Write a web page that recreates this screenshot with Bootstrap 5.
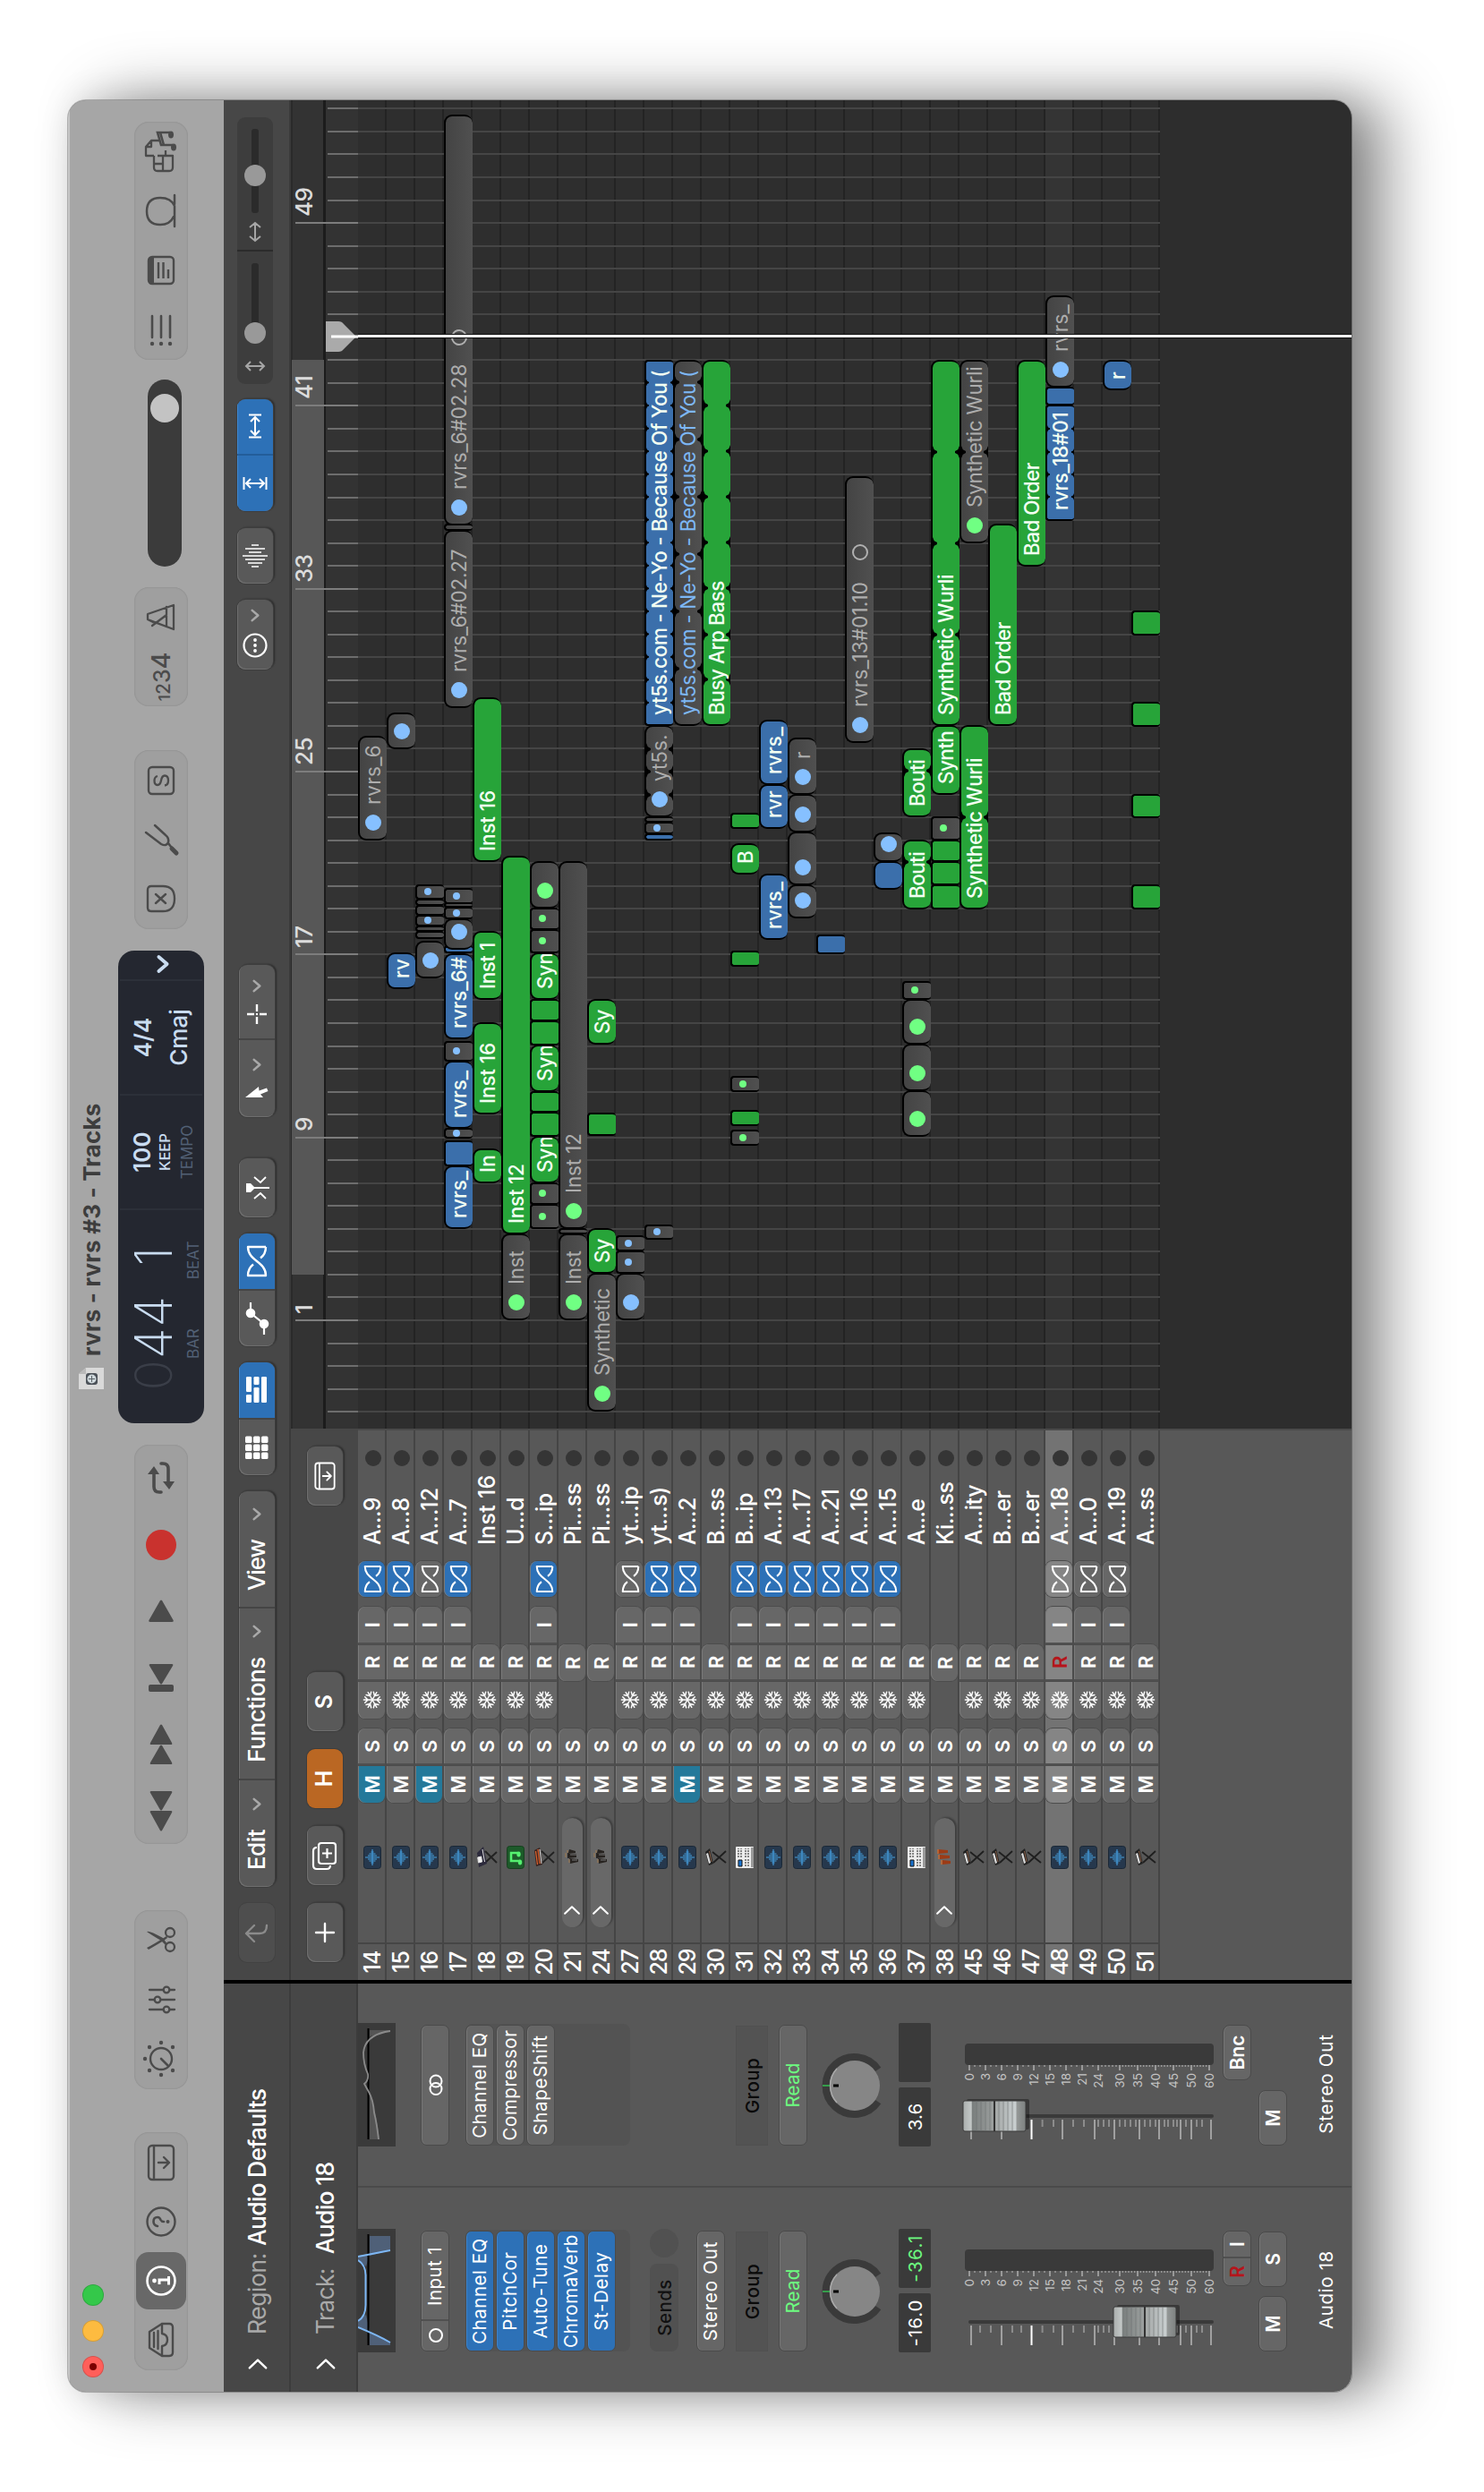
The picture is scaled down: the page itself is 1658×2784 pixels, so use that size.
<!DOCTYPE html>
<html lang="en">
<head>
<meta charset="utf-8">
<title>rvrs - rvrs #3 - Tracks</title>
<link href="https://cdn.jsdelivr.net/npm/bootstrap@5.3.0/dist/css/bootstrap.min.css" rel="stylesheet">
<style>
  body { margin: 0; background: #fff; font-family: Inter, "Liberation Sans", sans-serif; }
  /* portrait page that carries the landscape window turned a quarter to the left */
  .sheet { width: 1658px; height: 2784px; position: relative; overflow: hidden; }
  .stage { width: 2784px; height: 1658px; padding: 76px 112px; position: absolute; left: 0; top: 0; transform-origin: 0 0; transform: translateY(2784px) rotate(-90deg); }
  .win { width: 2560px; height: 1434px; border-radius: 20px; overflow: hidden; background: #585858; }
  .winshadow { border-radius: 20px; width: 2560px; height: 1434px; box-shadow: 0 0 0 1px rgba(0,0,0,.25), 0 40px 70px rgba(0,0,0,.42), 0 8px 40px rgba(0,0,0,.16); }
  svg { display: block; overflow: visible; }
  .fit { display: inline-block; white-space: nowrap; }
  /* title and toolbar */
  .topbar { height: 174px; background: #a6a6a6; color: #4b4b4b; box-shadow: inset 0 2px 0 #c6c6c6; }
  .titlerow { height: 56px; padding-left: 16px; }
  .light { width: 24px; height: 24px; border-radius: 50%; margin-right: 16px; border: 1px solid rgba(0,0,0,.15); }
  .light i { width: 8px; height: 8px; background: #7a0000; border-radius: 50%; }
  .doc { margin-left: 984px; margin-right: 13px; margin-top: -4px; }
  .wtitle { font-weight: 700; font-size: 26px; line-height: 52px; color: #3d3d3d; margin-top: -3px; }
  .toolrow { height: 96px; }
  .tgroup { height: 60px; border-radius: 16px; background: #9f9f9f; box-shadow: inset 0 0 2px rgba(0,0,0,.18); }
  .tgroup > div { display: flex; align-items: center; justify-content: center; }
  .g1 { margin-left: 24px; width: 266px; padding: 0 1px; } .g1 > div { width: 66px; }
  .g1 .sel { background: #686868; width: 64px; margin: 2px 1px; border-radius: 14px; color: #fff; height: 56px; }
  .g2 { margin-left: 48px; width: 200px; padding: 0 1px; } .g2 > div { width: 66px; }
  .g3 { margin-left: 74px; width: 446px; } .g3 > div { width: 74.3px; }
  .g4 { margin-left: 24px; width: 200px; padding: 0 1px; } .g4 > div { width: 66px; }
  .g5 { margin-left: 49px; width: 133px; } .g5 > div { width: 66.5px; }
  .g6 { margin-left: 22px; width: 266px; } .g6 > div { width: 66.5px; }
  .lcd { margin-left: 24px; width: 528px; height: 96px; border-radius: 18px; background: #242730; color: #c9dcf0; padding: 2px 0; }
  .lcd .cell { border-right: 2px solid #2c3039; height: 92px; text-align: center; }
  .lcd small { color: #526075; font-size: 17px; line-height: 20px; display: block; }
  .posn { width: 240px; font-weight: 200; font-size: 57px; line-height: 76px; padding-left: 36px; text-align: left !important; }
  .posn span { display: inline-block; width: 35.5px; text-align: center; }
  .posn .dimz { color: #3a3e48; } .posn .bt { margin-left: 26px; }
  .posn small { font-weight: 400; margin-top: -4px; padding-left: 36px; }
  .posn small b { font-weight: 400; margin-left: 55px; }
  .tempo { width: 128px; font-weight: 600; font-size: 26px; line-height: 30px; padding-top: 10px; }
  .tempo em { font-style: normal; font-size: 16.5px; font-weight: 500; display: block; line-height: 20px; }
  .tempo small { font-weight: 400; margin-top: 5px; }
  .sig { width: 128px; font-weight: 600; font-size: 26px; line-height: 40px; padding-top: 6px; }
  .sig div + div { font-weight: 500; }
  .vol { margin-left: 23px; margin-top: 8px; width: 209px; height: 38px; border-radius: 19px; background: #3b3b3b; padding: 3px 16px; }
  .vol i { width: 32px; height: 32px; border-radius: 50%; background: #c3c3c3; }
  .count4 { font-weight: 500; align-items: baseline; display: flex; }
  .count4 span:nth-child(1){font-size:17px} .count4 span:nth-child(2){font-size:21px} .count4 span:nth-child(3){font-size:25px} .count4 span:nth-child(4){font-size:29px}
  /* inspector */
  .insp { width: 460px; border-right: 4px solid #000; color: #fff; }
  .ihead { height: 75px; background: #474747; border-bottom: 2px solid #3c3c3c; font-size: 26.5px; font-weight: 500; padding-left: 24px; padding-top: 2px; }
  .ihead + .ihead { padding-top: 5px; }
  .ihead .lab { color: #a9a9a9; font-weight: 400; margin-left: 26px; }
  .strip { width: 230px; height: 1110px; padding-left: 45px; border-right: 2px solid #4a4a4a; font-size: 20.5px; }
  .strip + .strip { width: 226px; border-right: 0; }
  .eq { width: 138px; height: 42px; background: #3a3a3a; margin-left: -1px; overflow: hidden; }
  .slot { width: 135px; height: 32px; border-radius: 7px; background: #666; border: 1px solid #4a4a4a; box-shadow: inset 0 1px 0 #777; display: flex; align-items: center; justify-content: center; overflow: hidden; padding-top: 1px; }
  .slot.on { background: #2d71b7; box-shadow: inset 0 1px 0 #3d83ca; }
  .rack { height: 184px; width: 136px; border-radius: 8px; background: #535353; margin-top: 18px; }
  .rack .slot { margin-bottom: 2px; }
  .sendrow { height: 32px; margin-top: 22px; color: #111; font-weight: 500; }
  .sendrow .a { width: 98px; height: 32px; background: #515151; border-radius: 8px; margin-right: 7px; text-align: center; line-height: 34px; }
  .sendrow .b { width: 32px; height: 32px; background: #515151; border-radius: 50%; }
  .grp { width: 134px; height: 36px; background: #535353; border: 1px solid #505050; margin-top: 12px; color: #0a0a0a; text-align: center; line-height: 35px; font-weight: 500; }
  .rd { color: #6dfb80; margin-top: 12px; }
  .vbox { width: 66px; height: 36px; background: #3a3a3a; border-radius: 2px; text-align: center; line-height: 37px; }
  .kbtn { width: 62px; height: 32px; border-radius: 8px; background: #666; border: 1px solid #4a4a4a; box-shadow: inset 0 1px 0 #777; font-weight: 600; font-size: 21px; text-align: center; line-height: 32px; }
  .kbtn.half { display: flex; padding: 0; } .kbtn.half span { width: 50%; height: 30px; } .kbtn.half span + span { border-left: 2px solid #505050; }
  .redt { color: #b5151b; }
  /* tracks area */
  .main { width: 2100px; }
  .menubar { height: 75px; background: #474747; border-bottom: 2px solid #3a3a3a; padding-left: 20px; font-size: 26px; font-weight: 500; color: #fff; }
  .pill { height: 40px; border-radius: 9px; background: #595959; box-shadow: inset 1px 1px 0 #6e6e6e, 0 0 0 1px #3d3d3d, 1px 2px 2px rgba(0,0,0,.4); display: flex; align-items: center; overflow: hidden; }
  .pill > div { height: 40px; display: flex; align-items: center; justify-content: center; }
  .pill > div + div { border-left: 2px solid #454545; }
  .pill .blue { background: #2d71b7; box-shadow: inset 0 1px 0 #3f87cf; }
  .pill.up { margin-top: -4px; }
  .w66 { width: 66px; justify-content: center; }
  .slid { background: #3d3d3d; box-shadow: none; }
  .thead { width: 616px; height: 75px; background: #474747; padding-left: 20px; color: #fff; font-size: 25px; font-weight: 600; }
  .ruler { width: 1484px; height: 75px; background: #333; position: relative; overflow: hidden; }
  .rband { height: 39px; background: #333; border-top: 2px solid #2a2a2a; border-bottom: 3px solid #1c1c1c; box-sizing: border-box; }
  .cyc { position: absolute; top: 1px; height: 36px; background: #575757; }
  .tick { position: absolute; top: 41px; height: 34px; width: 2px; background: #6d6d6d; }
  .tick.maj { top: 5px; height: 70px; background: #7d7d7d; }
  .barno { position: absolute; top: -2px; font-size: 26px; line-height: 34px; font-weight: 500; color: #dcdcdc; letter-spacing: -.5px; }
  .tlist { width: 616px; height: 1110px; background: #585858; color: #fff; border-right: 2px solid #4a4a4a; }
  .trk { height: 32px; border-bottom: 2px solid #454545; align-items: stretch; font-size: 25px; font-weight: 500; line-height: 33px; }
  .trk.cur { background: #737373; }
  .tno { width: 42px; height: 30px; border-right: 2px solid #454545; text-align: center; letter-spacing: -1px; }
  .ticon { width: 156px; height: 32px; display: flex; align-items: center; }
  .disc { margin-left: 17px; margin-top: -2px; width: 122px; height: 23px; border-radius: 12px; background: #686868; box-shadow: 1px 2px 2px rgba(0,0,0,.3); display: flex; align-items: center; }
  .tb { height: 30px; width: 41.5px; background: #676767; text-align: center; font-size: 22px; font-weight: 600; display: flex; align-items: center; justify-content: center; padding-top: 2px; box-shadow: inset 0 1px 0 #7a7a7a, 0 0 0 1px #4c4c4c; }
  .cur .tb { background: #858585; }
  .tb.first { border-radius: 8px 0 0 8px; } .tb.last { border-radius: 0 8px 8px 0; } .tb.only { border-radius: 8px; }
  .tb + .tb { border-left: 2px solid #505050; }
  .tb.cy { background: #24799a; } .tb.fx { background: #2d71b7; border-radius: 8px; width: 40px; }
  .tb.fx.off { background: #676767; } .cur .tb.fx.off { background: #858585; }
  .tname { width: 88px; height: 30px; } .tdot { width: 18px; height: 18px; border-radius: 50%; background: #353535; margin-top: 8px; }
  .arr { width: 1484px; height: 1110px; background: #2d2d2d; position: relative; overflow: hidden; }
  .lane { height: 32px; border-bottom: 2px solid #232323; background: #2e2e2e; }
  .lane.cur { background: #343434; }
  .gl { position: absolute; top: 0; height: 896px; width: 2px; background: #454545; }
  .rg { position: absolute; height: 32px; border: 2px solid #000; border-bottom: 0; border-radius: 9px; overflow: hidden; font-size: 22.5px; line-height: 30px; white-space: nowrap; color: #f2fff2; font-weight: 500; }
  .rg.slim { border-radius: 4px; }
  .rg.b { background: #3b6fab; } .rg.g { background: #27a439; }
  .rg.k, .rg.m { background: linear-gradient(#444, #505050); color: #adadad; font-weight: 400; }
  .rg .tx { padding-left: 10px; } .rg.k .tx, .rg.m .tx { padding-left: 38px; } .rg.bt .tx { padding-left: 10px; color: #7db7f5; }
  .rg .dt { position: absolute; border-radius: 50%; background: #86c0ff; } .rg.m .dt { background: #70ff83; }
  .rg .rn { position: absolute; width: 18px; height: 18px; border: 2px solid #b0b0b0; border-radius: 50%; top: 6px; }
  .nt { position: absolute; width: 14px; height: 5px; background: #000; z-index: 1; clip-path: polygon(0 0, 100% 0, 70% 35%, 58% 100%, 42% 100%, 30% 35%); }
  .slim .nt { width: 8px; height: 3px; margin-left: 3px; }
  .nt.lo { transform: scaleY(-1); }
  .phead { position: absolute; top: 0; width: 3px; height: 1110px; background: #fff; box-shadow: 0 0 0 1px #111; z-index: 3; }
  .pmark { position: absolute; top: 39px; z-index: 3; }
</style>
<script src="https://cdn.jsdelivr.net/npm/bootstrap@5.3.0/dist/js/bootstrap.bundle.min.js"></script>
</head>
<body>
<svg width="0" height="0" class="position-absolute">
  <defs>
    <symbol id="i-flex" viewBox="-18 -12 36 24"><path d="M16 10V-10C0-10 0 10-16 10V-10C-9-10-5-6-3.500-4M3.500 4C5 6 9 10 16 10" fill="none" stroke="currentColor" stroke-width="2.400" stroke-linejoin="round"/></symbol>
    <symbol id="i-dl" viewBox="-21 -16 42 32"><g fill="none" stroke="currentColor" stroke-width="2.400" stroke-linecap="round" stroke-linejoin="round"><rect x="-19" y="-14" width="38" height="28" rx="4"/><path d="M-18-8H18M0-3V8M-6 3L0 9L6 3"/></g></symbol>
    <symbol id="i-snow" viewBox="-12 -12 24 24"><g stroke="currentColor" stroke-width="1.600" fill="none" stroke-linecap="round"><g id="arm"><path d="M0 0V-10.500M-3.500-9L0-5.500L3.500-9"/></g><use href="#arm" transform="rotate(60)"/><use href="#arm" transform="rotate(120)"/><use href="#arm" transform="rotate(180)"/><use href="#arm" transform="rotate(240)"/><use href="#arm" transform="rotate(300)"/></g></symbol>
    <symbol id="i-chev" viewBox="-8 -6 16 12"><path d="M-6-3.500L0 3.500L6-3.500" fill="none" stroke="currentColor" stroke-width="2.800" stroke-linecap="round" stroke-linejoin="round"/></symbol>
    <symbol id="i-right" viewBox="-8 -12 16 24"><path d="M-5-10.500L5 0L-5 10.500" fill="none" stroke="currentColor" stroke-width="2.800" stroke-linecap="round" stroke-linejoin="round"/></symbol>
    <symbol id="t-aud" viewBox="0 0 26 20"><rect x=".5" y=".5" width="25" height="19" rx="3" fill="#26384d" stroke="#1b2836"/><path d="M4 10h18M7 8.500v3M9 6.500v7M11 5v10M13 2v16M15 5v10M17 6.500v7M19 8.500v3" stroke="#459fe0" stroke-width="1.100"/></symbol>
    <symbol id="t-key" viewBox="0 0 26 24"><path d="M7 9L20 23M19 8L7 23" stroke="#1f1f1f" stroke-width="1.800"/><path d="M4 4L19 0L23 5L6 9Z" fill="#222"/><path d="M6 4L17 1L18 3L7 6Z" fill="#dcdcdc"/><path d="M8 7L20 4.500" stroke="#8a6048" stroke-width="1"/></symbol>
    <symbol id="t-key2" viewBox="0 0 26 24"><path d="M6 9L19 23M20 9L7 23" stroke="#222" stroke-width="1.800"/><path d="M3 3L21 1L24 7L5 10Z" fill="#3a2420"/><path d="M5 4.500L20 2.500M6 7L22 5" stroke="#d9622f" stroke-width="1.300"/><path d="M6 9L22 7" stroke="#ddd" stroke-width="1"/></symbol>
    <symbol id="t-syn" viewBox="0 0 26 24"><path d="M8 11L19 23M20 10L7 23" stroke="#222" stroke-width="2"/><path d="M2 3L18 1L25 8L6 12Z" fill="#2c2a3c"/><path d="M7 2.500l6-.8l1 4l-6 .8zM8 9.500L22 7" fill="#eee" stroke="#ddd" stroke-width="1"/></symbol>
    <symbol id="t-note" viewBox="0 0 26 20"><rect x=".5" y=".5" width="25" height="19" rx="3" fill="#1d5a2a" stroke="#17401f"/><path d="M9 15V5H18V13" fill="none" stroke="#55f070" stroke-width="2.600"/><ellipse cx="7.500" cy="15" rx="3" ry="2.200" fill="#55f070"/><ellipse cx="16.500" cy="13.500" rx="3" ry="2.200" fill="#55f070"/></symbol>
    <symbol id="t-drum" viewBox="0 0 26 20"><rect x="1" width="24" height="20" rx="1" fill="#ececec"/><rect x="2" y="17" width="22" height="3" fill="#999"/><path d="M3 3h7v4H3z" fill="#1b74d0" stroke="#111"/><path d="M13 3h10M13 6h10M3 11h8M3 14h8M13 11h10M13 14h10" stroke="#777" stroke-width="1.800" stroke-dasharray="2 1"/></symbol>
    <symbol id="t-band" viewBox="0 0 26 20"><path d="M6 8l6-1l-1 10h-3zM12 5h6l-1 10h-4zM18 6l4 1l-2 7h-2z" fill="#272320"/><path d="M7 7h4M13 3h5M18 5h3" stroke="#8c755a" stroke-width="1.600"/><path d="M10 10v6M16 8v7" stroke="#777"/></symbol>
    <symbol id="t-conga" viewBox="0 0 26 20"><path d="M5 8h5l-1 9h-3zM11 5h5l-1 11h-3zM17 3h5l-1 11h-3z" fill="#9c3b16"/><path d="M5 7h5M11 4h5M17 3h5" stroke="#c06a35" stroke-width="1.600"/></symbol>
    <linearGradient id="cap" x1="0" y1="0" x2="0" y2="1"><stop offset="0" stop-color="#a9adac"/><stop offset=".13" stop-color="#c3c8c7"/><stop offset=".15" stop-color="#7a7f7e"/><stop offset=".48" stop-color="#9b9f9e"/><stop offset=".52" stop-color="#a4a8a7"/><stop offset=".84" stop-color="#c9cfd0"/><stop offset=".86" stop-color="#949897"/><stop offset="1" stop-color="#7d8180"/></linearGradient>
  </defs>
</svg>

<div class="sheet"><div class="stage"><div class="winshadow"><div class="win d-flex flex-column">

  <header class="topbar">
    <div class="titlerow d-flex align-items-center">
      <div class="light d-flex align-items-center justify-content-center" style="background:#ff5f5a"><i></i></div>
      <div class="light" style="background:#fdbb40"></div>
      <div class="light" style="background:#34c84a"></div>
      <svg class="doc" width="24" height="28" viewBox="0 0 24 28"><path d="M0 0H17L24 8V28H0Z" fill="#d9d9d9"/><path d="M17 0V8H24Z" fill="#b9b9b9"/><rect x="5" y="8" width="13" height="13" rx="3" fill="#4b5158"/><circle cx="11.500" cy="14.500" r="5" fill="#cfd8dc"/><path d="M8 14.500h7M11.500 11v7" stroke="#5b6368"/></svg>
      <div class="wtitle fit" data-w="282">rvrs - rvrs #3 - Tracks</div>
    </div>
    <div class="toolrow d-flex align-items-center">
      <div class="tgroup g1 d-flex">
        <div><svg width="40" height="32" viewBox="-20 -16 40 32"><g fill="none" stroke="currentColor" stroke-width="2.400" stroke-linejoin="round" stroke-linecap="round"><path d="M-18 1L-9-13H9L18 1V9Q18 13 14 13H-14Q-18 13-18 9ZM-18 1H-7Q-6 7 0 7Q6 7 7 1H18M-8-8H8M-10-3.500H10"/></g></svg></div>
        <div class="sel"><svg width="36" height="36" viewBox="-18 -18 36 36"><circle r="15.500" fill="none" stroke="currentColor" stroke-width="2.600"/><circle cx="0" cy="-7.500" r="2.400" fill="currentColor"/><path d="M-4-2H1V8M-4.500 8.500H5" fill="none" stroke="currentColor" stroke-width="3"/></svg></div>
        <div><svg width="36" height="36" viewBox="-18 -18 36 36"><circle r="15.500" fill="none" stroke="currentColor" stroke-width="2.400"/><path d="M-5-4Q-4-8.500 0-8.500Q5-8.500 5-4Q5-1.500 2-.5Q0 .5 0 3" fill="none" stroke="currentColor" stroke-width="2.600" stroke-linecap="round"/><circle cy="7.500" r="2" fill="currentColor"/></svg></div>
        <div><svg width="42" height="32"><use href="#i-dl"/></svg></div>
      </div>
      <div class="tgroup g2 d-flex">
        <div><svg width="40" height="40" viewBox="-20 -20 40 40"><circle r="12" fill="none" stroke="currentColor" stroke-width="2.400"/><path d="M0 0L-7.500 7.500" stroke="currentColor" stroke-width="2.600" stroke-linecap="round"/><g fill="currentColor"><circle cx="0" cy="-18" r="2.200"/><circle cx="18" cy="0" r="2.200"/><circle cx="-18" cy="0" r="2.200"/><circle cx="13" cy="-13" r="2.200"/><circle cx="-13" cy="-13" r="2.200"/><circle cx="13" cy="13" r="2.200"/><circle cx="-13" cy="13" r="2.200"/></g></svg></div>
        <div><svg width="36" height="36" viewBox="-18 -18 36 36"><g fill="#9f9f9f" stroke="currentColor" stroke-width="2.300" stroke-linecap="round"><path d="M-11-13V15M0-13V15M11-13V15"/><circle cx="-11" cy="6" r="3.300"/><circle cx="0" cy="-4" r="3.300"/><circle cx="11" cy="6" r="3.300"/></g></svg></div>
        <div><svg width="32" height="36" viewBox="-16 -18 32 36"><g fill="none" stroke="currentColor" stroke-width="2.300"><circle cx="-7" cy="10" r="5"/><circle cx="9" cy="10" r="5"/></g><path d="M-8-16Q-4-8 5 6L3 7L0 3Q-6-7-10-14ZM10-16Q12-14 3 2L-4 7L-5 5L0 0Q7-12 10-16Z" fill="currentColor"/></svg></div>
      </div>
      <div class="tgroup g3 d-flex">
        <div><svg width="46" height="28" viewBox="-23 -14 46 28"><path d="M0-11V11Q0 13-2 12L-22 1Q-23 0-22-1L-2-12Q0-13 0-11ZM22-11V11Q22 13 20 12L1 1Q0 0 1-1L20-12Q22-13 22-11Z" fill="currentColor"/></svg></div>
        <div><svg width="46" height="28" viewBox="-23 -14 46 28"><path transform="scale(-1 1)" d="M0-11V11Q0 13-2 12L-22 1Q-23 0-22-1L-2-12Q0-13 0-11ZM22-11V11Q22 13 20 12L1 1Q0 0 1-1L20-12Q22-13 22-11Z" fill="currentColor"/></svg></div>
        <div><svg width="32" height="28" viewBox="-16 -14 32 28"><rect x="-16" y="-14" width="8" height="28" rx="2" fill="currentColor"/><path d="M15-12V12Q15 14 13 13L-7 1Q-8 0-7-1L13-13Q15-14 15-12Z" fill="currentColor"/></svg></div>
        <div><svg width="26" height="28" viewBox="-13 -14 26 28"><path d="M-12-12V12Q-12 15-9 13L12 1Q13 0 12-1L-9-13Q-12-15-12-12Z" fill="currentColor"/></svg></div>
        <div><svg width="34" height="34"><circle cx="17" cy="17" r="17" fill="#c9322e"/></svg></div>
        <div><svg width="36" height="32" viewBox="-18 -16 36 32"><g fill="none" stroke="currentColor" stroke-width="3.600" stroke-linecap="round"><path d="M-16 0V-2Q-16-8-10-8H5"/><path d="M16 0V2Q16 8 10 8H-4"/></g><path d="M4-15L13-8L4-2ZM-4 2L-13 9L-4 15Z" fill="currentColor"/></svg></div>
      </div>
      <div class="lcd d-flex">
        <div class="cell posn"><div><span class="dimz">0</span><span>4</span><span>4</span><span class="bt">1</span></div><small>BAR<b>BEAT</b></small></div>
        <div class="cell tempo"><div class="fit" data-w="45">100</div><em>KEEP</em><small>TEMPO</small></div>
        <div class="cell sig"><div>4/4</div><div>Cmaj</div></div>
        <div class="d-flex align-items-center" style="padding:4px 0 0 6px"><svg width="22" height="16"><use href="#i-chev"/></svg></div>
      </div>
      <div class="tgroup g4 d-flex">
        <div><svg width="32" height="34" viewBox="-16 -17 32 34"><path d="M-14-11Q-14-15-10-15H10Q14-15 14-11V2Q14 15 0 15Q-14 15-14 2ZM-5-6L5 5M5-6L-5 5" fill="none" stroke="currentColor" stroke-width="2.400" stroke-linecap="round"/></svg></div>
        <div><svg width="36" height="38" viewBox="-18 -19 36 38"><path d="M8-17L-5 0Q-8 6-3 8Q2 9 5 5L16-7M-4 8L-12 14" fill="none" stroke="currentColor" stroke-width="2.500" stroke-linecap="round"/><path d="M-10 12L-15 17" stroke="currentColor" stroke-width="5" stroke-linecap="round"/></svg></div>
        <div><svg width="32" height="32" viewBox="-16 -16 32 32"><rect x="-15" y="-14" width="30" height="28" rx="4" fill="none" stroke="currentColor" stroke-width="2.400"/><path d="M5-4Q4-7.500 0-7.500Q-5-7.500-5-4Q-5-1 0 0Q5.500 1 5.500 4Q5.500 8 0 8Q-5 8-5.500 4" fill="none" stroke="currentColor" stroke-width="2.300"/></svg></div>
      </div>
      <div class="tgroup g5 d-flex">
        <div><span class="count4"><span>1</span><span>2</span><span>3</span><span>4</span></span></div>
        <div><svg width="34" height="34" viewBox="-17 -17 34 34"><g fill="none" stroke="currentColor" stroke-width="2.300" stroke-linejoin="round" stroke-linecap="round"><path d="M-6-9L-3-15H3L13 14H-14L-7-5M-11 6H11M2 6L-10-10M-3-15L-14 14M2 6L-7-6"/></g></svg></div>
      </div>
      <div class="vol d-flex justify-content-end"><i></i></div>
      <div class="tgroup g6 d-flex">
        <div><svg width="36" height="26" viewBox="-18 -13 36 26"><path d="M-8-10H16M-8 0H16M-8 10H16" stroke="currentColor" stroke-width="2.600" stroke-linecap="round"/><g fill="currentColor"><circle cx="-15" cy="-10" r="2.200"/><circle cx="-15" cy="0" r="2.200"/><circle cx="-15" cy="10" r="2.200"/></g></svg></div>
        <div><svg width="34" height="32" viewBox="-17 -16 34 32"><rect x="-15" y="-14" width="30" height="28" rx="4" fill="none" stroke="currentColor" stroke-width="2.400"/><path d="M-15-8V-10Q-15-14-11-14H11Q15-14 15-10V-8Z" fill="currentColor"/><path d="M-9-3H9M-9 2.500H9M-9 8H1" stroke="currentColor" stroke-width="2.400"/></svg></div>
        <div><svg width="38" height="36" viewBox="-19 -18 38 36"><path d="M-17 15H-8M18 15H8M-9 15H6Q15 11 15-1Q15-16 0-16Q-15-16-15-1Q-15 10-6 14" fill="none" stroke="currentColor" stroke-width="2.500" stroke-linecap="round"/></svg></div>
        <div><svg width="44" height="38" viewBox="-22 -19 44 38"><g fill="none" stroke="currentColor" stroke-width="2.300" stroke-linejoin="round"><path d="M-5-8V-17H5L12-11V5H-5V-4M5-17V-11H12M-5-8H-18Q-22-8-22-4V9Q-22 13-18 13H-5V4M-22 2H-6M-14-8V2"/></g><rect x="1" y="-2" width="20" height="18" fill="#9f9f9f"/><path d="M7 13V0L21-4V10M7 3L21-1" fill="none" stroke="currentColor" stroke-width="2.600"/><ellipse cx="4.500" cy="14" rx="4" ry="3" fill="currentColor"/><ellipse cx="18.500" cy="11" rx="4" ry="3" fill="currentColor"/></svg></div>
      </div>
    </div>
  </header>

  <div class="d-flex flex-grow-1">
    <aside class="insp">
      <div class="ihead d-flex align-items-center"><svg width="14" height="24"><use href="#i-right"/></svg><span class="lab fit" data-w="91">Region:</span><span class="fit ms-2" data-w="175">Audio Defaults</span></div>
      <div class="ihead d-flex align-items-center"><svg width="14" height="24"><use href="#i-right"/></svg><span class="lab fit" data-w="74">Track:</span><span class="fit" style="margin-left:16px" data-w="103">Audio 18</span></div>
      <div class="d-flex">
        <section class="strip">
          <div class="eq"><svg width="138" height="42"><path d="M8 36V13H22L11 36ZM108 13H130V36H114Z" fill="#4f6078"/><path d="M28 0H35L42 9L24 13ZM103 0H108L110 13L96 9Z" fill="#4f6078"/><path d="M8 11.500H132" stroke="#000" stroke-width="2"/><path d="M11 36Q19 22 28 0M35 0Q40 8.500 53 8.500H86Q98 8.500 103 0M107 0L114 36" fill="none" stroke="#7db7f5" stroke-width="2"/></svg></div>
          <div class="slot justify-content-start" style="margin-top:28px"><svg width="34" height="32" viewBox="0 0 34 32"><circle cx="17" cy="16" r="7" fill="none" stroke="#fff" stroke-width="2"/><path d="M34 0V32" stroke="#505050" stroke-width="2"/></svg><span class="fit" style="margin-left:16px" data-w="66">Input 1</span></div>
          <div class="rack">
            <div class="slot on"><span class="fit" data-w="119">Channel EQ</span></div><div class="slot on"><span class="fit" data-w="88">PitchCor</span></div><div class="slot on"><span class="fit" data-w="106">Auto-Tune</span></div><div class="slot on"><span class="fit" data-w="127">ChromaVerb</span></div><div class="slot on"><span class="fit" data-w="88">St-Delay</span></div>
          </div>
          <div class="sendrow d-flex"><div class="a"><span class="fit" data-w="63">Sends</span></div><div class="b"></div></div>
          <div class="slot" style="margin-top:20px"><span class="fit" data-w="112">Stereo Out</span></div>
          <div class="grp"><span class="fit" data-w="62">Group</span></div>
          <div class="slot rd"><span class="fit" data-w="50">Read</span></div>
          <div class="knobrow"></div>
          <div class="d-flex" style="gap:6px;margin-left:-1px"><div class="vbox"><span class="fit" data-w="53">-16.0</span></div><div class="vbox" style="color:#6dfb80"><span class="fit" data-w="53">-36.1</span></div></div>
          <div class="fader" data-cap="170"></div>
          <div class="d-flex" style="margin-left:73px"><div class="kbtn half"><span class="redt">R</span><span>I</span></div></div>
          <div class="d-flex" style="gap:10px;margin-top:8px"><div class="kbtn">M</div><div class="kbtn">S</div></div>
          <div class="text-center" style="width:138px;margin-top:29px"><span class="fit" data-w="88">Audio 18</span></div>
        </section>
        <section class="strip">
          <div class="eq"><svg width="138" height="42"><path d="M8 13V24Q40 20 60 13ZM123 13L129 36H130V13Z" fill="#555"/><path d="M8 11.500H132" stroke="#000" stroke-width="2"/><path d="M8 23Q26 21 38 18Q52 17 61 12L70 7Q74 12 81 11Q92 6 105 6Q125 8 129 36" fill="none" stroke="#8a8a8a" stroke-width="1.800"/></svg></div>
          <div class="slot" style="margin-top:28px"><svg width="26" height="16" viewBox="0 0 26 16"><g fill="none" stroke="#fff" stroke-width="2"><circle cx="8.500" cy="8" r="6.500"/><circle cx="17" cy="8" r="6.500"/></g></svg></div>
          <div class="rack"><div class="slot"><span class="fit" data-w="119">Channel EQ</span></div><div class="slot"><span class="fit" data-w="124">Compressor</span></div><div class="slot"><span class="fit" data-w="112">ShapeShift</span></div></div>
          <div style="height:106px"></div>
          <div class="grp"><span class="fit" data-w="62">Group</span></div>
          <div class="slot rd"><span class="fit" data-w="50">Read</span></div>
          <div class="knobrow"></div>
          <div class="d-flex" style="gap:6px;margin-left:-1px"><div class="vbox">3.6</div><div class="vbox"></div></div>
          <div class="fader" data-cap="2"></div>
          <div class="d-flex" style="margin-left:73px"><div class="kbtn">Bnc</div></div>
          <div class="d-flex" style="gap:10px;margin-top:8px"><div class="kbtn">M</div></div>
          <div class="text-center" style="width:138px;margin-top:29px"><span class="fit" data-w="112">Stereo Out</span></div>
        </section>
      </div>
    </aside>

    <main class="main">
      <div class="menubar d-flex align-items-center">
        <div class="pill w66" style="background:#4e4e4e;box-shadow:0 0 0 1px #424242"><svg width="28" height="28" viewBox="-14 -14 28 28"><path d="M-1-11V3Q-1 11 8 11M-10-3L-1-12L8-3" fill="none" stroke="#8b8b8b" stroke-width="2.400" stroke-linecap="round" stroke-linejoin="round"/></svg></div>
        <div class="pill" style="margin-left:18px;width:442px">
          <div style="width:119px"><span class="fit" data-w="45">Edit</span><svg width="15" height="12" style="margin-left:21px;color:#a8a8a8"><use href="#i-chev"/></svg></div>
          <div style="width:192px"><span class="fit" data-w="117">Functions</span><svg width="15" height="12" style="margin-left:21px;color:#a8a8a8"><use href="#i-chev"/></svg></div>
          <div style="width:131px"><span class="fit" data-w="57">View</span><svg width="15" height="12" style="margin-left:21px;color:#a8a8a8"><use href="#i-chev"/></svg></div>
        </div>
        <div class="pill" style="margin-left:18px;width:126px">
          <div style="width:62px"><svg width="26" height="26" viewBox="0 0 26 26"><g fill="#fff"><rect width="7.500" height="7.500" rx="1.500"/><rect x="9" width="7.500" height="7.500" rx="1.500"/><rect x="18" width="7.500" height="7.500" rx="1.500"/><rect y="9" width="7.500" height="7.500" rx="1.500"/><rect x="9" y="9" width="7.500" height="7.500" rx="1.500"/><rect x="18" y="9" width="7.500" height="7.500" rx="1.500"/><rect y="18" width="7.500" height="7.500" rx="1.500"/><rect x="9" y="18" width="7.500" height="7.500" rx="1.500"/><rect x="18" y="18" width="7.500" height="7.500" rx="1.500"/></g></svg></div>
          <div class="blue" style="width:64px"><svg width="29" height="23" viewBox="0 0 29 23"><g fill="#fff"><rect width="9" height="6" rx="1.200"/><rect x="12" width="17" height="6" rx="1.200"/><rect y="8.500" width="17" height="6" rx="1.200"/><rect x="20" y="8.500" width="9" height="6" rx="1.200"/><rect y="17" width="29" height="6" rx="1.200"/></g></svg></div>
        </div>
        <div class="pill" style="margin-left:18px;width:126px">
          <div style="width:62px"><svg width="38" height="26" viewBox="-19 -13 38 26"><path d="M-18 8H-6L6-7H18" stroke="#fff" stroke-width="2.200" fill="none"/><circle cx="-6" cy="8" r="5.300" fill="#fff"/><circle cx="6" cy="-7" r="5.300" fill="#fff"/></svg></div>
          <div class="blue" style="width:64px"><svg width="38" height="24"><use href="#i-flex"/></svg></div>
        </div>
        <div class="pill w66" style="margin-left:18px"><svg width="28" height="28" viewBox="-14 -14 28 28"><path d="M-5-12H5V-7L1-3H-1L-5-7Z" fill="#fff"/><path d="M0-5V14M-12-3L-6 4L-12 10M12-3L6 4L12 10" fill="none" stroke="#fff" stroke-width="1.800"/></svg></div>
        <div class="pill" style="margin-left:46px;width:170px">
          <div style="width:86px"><svg width="18" height="28" viewBox="0 0 18 28"><path d="M2 1L14 16L9.500 16.500L12.500 25L9 26.500L5.500 18L2 21Z" fill="#fff"/></svg><svg width="15" height="12" style="margin-left:13px;color:#a8a8a8"><use href="#i-chev"/></svg></div>
          <div style="width:84px"><svg width="22" height="22" viewBox="-11 -11 22 22"><path d="M0-11V-3M0 3V11M-11 0H-3M3 0H11" stroke="#fff" stroke-width="2.400"/><circle r="1.200" fill="#fff"/></svg><svg width="15" height="12" style="margin-left:13px;color:#a8a8a8"><use href="#i-chev"/></svg></div>
        </div>
        <div class="pill up" style="margin-left:330px;width:78px;padding-left:13px"><svg width="28" height="28" viewBox="-14 -14 28 28"><circle r="12.500" fill="none" stroke="#fff" stroke-width="2.200"/><g fill="#fff"><circle cx="-6" r="1.900"/><circle r="1.900"/><circle cx="6" r="1.900"/></g></svg><svg width="15" height="12" style="margin-left:12px;color:#a8a8a8"><use href="#i-chev"/></svg></div>
        <div class="pill up justify-content-center" style="margin-left:18px;width:62px"><svg width="28" height="30" viewBox="-14 -15 28 30"><path d="M-12-4V4M-8-8V8M-4-11V11M0-14V14M4-7V7M8-11V11M12-4V4" stroke="#fff" stroke-width="1.700"/></svg></div>
        <div class="pill up" style="margin-left:19px;width:125px">
          <div class="blue" style="width:62px"><svg width="16" height="28" viewBox="-8 -14 16 28"><path d="M-7-12.500H7M-7 12.500H7M0-10V10M-5-5L0-10L5-5M-5 5L0 10L5 5" fill="none" stroke="#fff" stroke-width="2"/></svg></div>
          <div class="blue" style="width:63px;border-color:#235d9a"><svg width="28" height="16" viewBox="-14 -8 28 16"><path d="M-12.500-7V7M12.500-7V7M-10 0H10M-5-5L-10 0L-5 5M5-5L10 0L5 5" fill="none" stroke="#fff" stroke-width="2"/></svg></div>
        </div>
        <div class="pill up slid" style="margin-left:17px;width:298px">
          <div style="width:148px"><svg width="148" height="40" viewBox="0 0 148 40"><path d="M20 10V30M15 15L20 10L25 15M15 25L20 30L25 25" fill="none" stroke="#a5a5a5" stroke-width="2"/><rect x="46" y="16" width="89" height="8" rx="3" fill="#2b2b2b"/><circle cx="57" cy="20" r="12" fill="#999"/></svg></div>
          <div style="width:150px;border-color:#2b2b2b"><svg width="148" height="40" viewBox="0 0 148 40"><path d="M10 20H30M15 14L10 20L15 26M25 14L30 20L25 26" fill="none" stroke="#a5a5a5" stroke-width="2"/><rect x="41" y="16" width="94" height="8" rx="3" fill="#2b2b2b"/><circle cx="83" cy="20" r="12" fill="#999"/></svg></div>
        </div>
      </div>
      <div class="d-flex">
        <div class="thead d-flex align-items-center">
          <div class="pill w66"><svg width="22" height="22" viewBox="-11 -11 22 22"><path d="M-10 0H10M0-10V10" stroke="#fff" stroke-width="2.400" stroke-linecap="round"/></svg></div>
          <div class="pill w66" style="margin-left:20px"><svg width="32" height="28" viewBox="-16 -14 32 28"><g fill="none" stroke="#fff" stroke-width="2.200" stroke-linejoin="round"><rect x="-9" y="-7" width="23" height="19" rx="3"/><path d="M-11 6Q-15 6-15 2V-9Q-15-13-11-13H5Q9-13 9-9M2.500-3V8M-3 2.500H8"/></g></svg></div>
          <div class="pill w66" style="margin-left:20px;background:#ba6723;box-shadow:0 0 0 1px #3d3d3d">H</div>
          <div class="pill w66" style="margin-left:20px">S</div>
          <div class="pill w66" style="margin-left:186px"><svg width="32" height="26"><use href="#i-dl"/></svg></div>
        </div>
        <div class="ruler" id="ruler"><div class="rband"></div><div class="cyc" style="left:172px;width:1022px"></div></div>
      </div>
      <div class="d-flex">
        <div class="tlist" id="tlist"></div>
        <div class="arr" id="arr"></div>
      </div>
    </main>
  </div>
</div></div></div></div>

<script>
// track rows: number, name, name width, icon, flags (m muted, f freeze, i input, X flex on, x flex off, d disclosure)
const tracks = [
 [14,'A...9',53,'aud','mfiX'],[15,'A...8',53,'aud','fiX'],[16,'A...12',64,'aud','mfix'],[17,'A...7',51,'aud','fiX'],
 [18,'Inst 16',79,'syn','f'],[19,'U...d',53,'note','f'],[20,'S...ip',58,'key2','fiX'],[21,'Pi...ss',69,'band','d'],
 [24,'Pi...ss',69,'band','d'],[27,'yt...ip',66,'aud','fix'],[28,'yt...s)',65,'aud','fiX'],[29,'A...2',53,'aud','mfiX'],
 [30,'B...ss',64,'key','f'],[31,'B...ip',58,'drum','fiX'],[32,'A...13',65,'aud','fiX'],[33,'A...17',63,'aud','fiX'],
 [34,'A...21',62,'aud','fiX'],[35,'A...16',64,'aud','fiX'],[36,'A...15',64,'aud','fiX'],[37,'A...e',51,'drum','f'],
 [38,'Ki...ss',70,'conga','d'],[45,'A...ity',67,'key','f'],[46,'B...er',61,'key','f'],[47,'B...er',61,'key','f'],
 [48,'A...18',65,'aud','fixc'],[49,'A...0',53,'aud','fix'],[50,'A...19',65,'aud','fix'],[51,'A...ss',64,'key','f']];
let h = '';
for (const [no, name, w, icon, fl] of tracks) {
  const on = c => fl.includes(c);
  const ic = `<svg width="26" height="${/key|syn/.test(icon) ? 24 : 20}"><use href="#t-${icon}"/></svg>`;
  const iconCell = on('d')
    ? `<div class="disc"><svg width="12" height="20" style="margin-left:13px"><use href="#i-right"/></svg><span style="margin-left:40px">${ic}</span></div>`
    : `<span style="margin-left:82px">${ic}</span>`;
  const edge = on('f') ? '' : 'only';
  h += `<div class="trk d-flex ${on('c') ? 'cur' : ''}"><div class="tno">${no}</div><div class="ticon">${iconCell}</div>
   <div class="tb first ${on('m') ? 'cy' : ''}">M</div><div class="tb last">S</div>
   <div class="d-flex" style="width:136px;padding-left:11px">
   ${on('f') ? '<div class="tb first"><svg width="22" height="22"><use href="#i-snow"/></svg></div>' : '<div style="width:41.5px"></div>'}
   <div class="tb ${edge || (on('i') ? '' : 'last')} ${on('c') ? 'redt' : ''}">R</div>
   ${on('i') ? '<div class="tb last">I</div>' : ''}</div>
   <div style="width:69px;padding-left:11px">${on('X') || on('x') ? `<div class="tb fx ${on('x') ? 'off' : ''}"><svg width="32" height="21"><use href="#i-flex"/></svg></div>` : ''}</div>
   <div class="tname"><span class="fit" data-w="${w}">${name}</span></div><div class="tdot"></div></div>`;
}
document.getElementById('tlist').innerHTML = h;

// bar grid; timeline coordinates start at 1076
const O = 1076, barX = b => Math.round(1197 + 25.54 * (b - 1)) - 1 - O;
let rul = '', grid = '';
for (let b = -3; b <= 54; b++) {
  const maj = b > 0 && (b - 1) % 8 === 0;
  rul += `<div class="tick ${maj ? 'maj' : ''}" style="left:${barX(b)}px"></div>`;
  if (maj) rul += `<div class="barno" style="left:${barX(b) + 8}px">${b}</div>`;
  grid += `<div class="gl" style="left:${barX(b)}px"></div>`;
}
rul += `<svg class="pmark" style="left:${2279 - O}px" width="34" height="34" viewBox="0 0 34 34"><path d="M0 0H34V14Q34 18 31 20L17 34L3 20Q0 18 0 14Z" fill="#aaa"/><path d="M17 6V36" stroke="#fff" stroke-width="3"/></svg>`;
document.getElementById('ruler').insertAdjacentHTML('beforeend', rul);

// regions: lane, start, end, kind (b audio, g midi, k muted audio, m muted midi), label, notches, options
const many = (a, z, s) => { const o = []; for (let x = a; x < z; x += s) o.push(x); return o; };
const regions = [
 [0,1733,1850,'k','rvrs_6',,{w:67}],[1,1835,1876,'k'],[1,1567,1608,'b','rv'],
 [2,1579,1621,'k'],[2,1623,1632,'k','',,{d:0}],[2,1631,1638,'k','',,{d:0}],[2,1637,1650,'k'],[2,1649,1661,'k','',,{d:0}],[2,1660,1668,'k','',,{d:0}],[2,1667,1684,'k'],
 [3,1299,1370,'b','rvrs_'],[3,1369,1398,'b'],[3,1400,1412,'k'],[3,1411,1487,'b','rvrs_'],[3,1486,1509,'k'],[3,1511,1607,'b','rvrs_6#',,{w:80}],[3,1607,1616,'b'],[3,1611,1646,'k'],[3,1645,1659,'k'],[3,1658,1664,'k','',,{d:0}],[3,1662,1680,'k'],
 [3,1881,2080,'k','rvrs_6#02.27',,{w:137}],[3,2079,2087,'k','',,{d:0}],[3,2085,2544,'k','rvrs_6#02.28',,{w:140,r:2295}],
 [4,1350,1389,'g','In'],[4,1427,1530,'g','Inst 16',,{w:68}],[4,1555,1632,'g','Inst 1',,{w:52}],[4,1709,1893,'g','Inst 16',,{w:68}],
 [5,1197,1294,'m','Inst',,{w:38}],[5,1293,1716,'g','Inst 12',,{w:67}],
 [6,1299,1327,'m'],[6,1326,1351,'m'],[6,1350,1403,'g','Syn'],[6,1402,1430,'g'],[6,1429,1453,'g'],[6,1452,1505,'g','Syn'],[6,1504,1532,'g'],[6,1531,1556,'g'],[6,1555,1608,'g','Syn'],[6,1607,1634,'m'],[6,1633,1658,'m'],[6,1657,1710,'m'],
 [7,1197,1294,'m','Inst',,{w:38}],[7,1293,1300,'m','',,{d:0}],[7,1299,1710,'m','Inst 12',,{w:67}],
 [8,1095,1250,'m','Synthetic',,{w:98}],[8,1249,1300,'g','Sy'],[8,1403,1429,'g'],[8,1505,1556,'g','Sy'],
 [9,1197,1250,'k'],[9,1249,1275,'k'],[9,1274,1292,'k'],
 [10,1287,1304,'k'],[10,1733,1741,'b'],[10,1740,1754,'k'],[10,1753,1760,'k','',,{d:0}],[10,1759,1862,'k','yt5s.',[1784,1810,1835],{w:52}],
 [10,1861,2270,'b','yt5s.com - Ne-Yo - Because Of You (',many(1887,2260,25.54),{w:385,s:1}],
 [11,1861,2270,'k bt','yt5s.com - Ne-Yo - Because Of You (',[1925,1989,2053,2117,2181,2245],{w:385,d:0}],
 [12,1861,2270,'g','Busy Arp Bass',[1913,1963,2015,2066,2117,2168,2219],{w:150}],
 [13,1392,1410,'m'],[13,1414,1432,'g'],[13,1452,1470,'m'],[13,1592,1610,'g'],[13,1695,1730,'g','B'],[13,1746,1764,'g'],
 [14,1622,1696,'b','rvrs_'],[14,1746,1796,'b','rvr'],[14,1795,1868,'b','rvrs_'],
 [15,1646,1684,'k'],[15,1683,1743,'k'],[15,1742,1785,'k'],[15,1784,1848,'k','r'],
 [16,1606,1628,'b'],[17,1842,2140,'k','rvrs_13#01.10',,{w:140,r:2055}],
 [18,1678,1710,'b'],[18,1709,1742,'k'],
 [19,1402,1454,'m'],[19,1453,1506,'m'],[19,1505,1556,'m'],[19,1555,1576,'m'],[19,1656,1734,'g','Bouti',[1709],{w:52}],[19,1759,1836,'g','Bouti',[1811],{w:52}],
 [20,1656,1684,'g'],[20,1683,1710,'g'],[20,1709,1734,'g'],[20,1733,1760,'m'],[20,1784,1862,'g','Synth',,{w:59}],[20,1861,2270,'g','Synthetic Wurli',[1963,2065,2167],{w:157}],
 [21,1656,1862,'g','Synthetic Wurli',[1759],{w:157}],[21,2065,2270,'m','Synthetic Wurli',[2167],{w:157}],
 [22,1861,2087,'g','Bad Order',,{w:104}],[23,2039,2270,'g','Bad Order',,{w:104}],
 [24,2090,2220,'b','rvrs_18#01',[2117,2142,2167,2193],{w:110,s:1}],[24,2219,2240,'b'],[24,2239,2342,'k','rvrs_',,{w:53}],
 [26,2236,2270,'b','r'],
 [27,1656,1684,'g'],[27,1758,1785,'g'],[27,1860,1888,'g'],[27,1962,1990,'g']];
let a = tracks.map(t => `<div class="lane ${t[4].includes('c') ? 'cur' : ''}"></div>`).join('') + grid;
for (const [row, x1, x2, kind, label = '', notch = [], o = {}] of regions) {
  const w = x2 - x1, top = row * 32, muted = /^[km]/.test(kind);
  let inner = '';
  if (muted && o.d !== 0) {
    const d = w >= 32 ? 18 : 8, c = w >= 32 ? 18 : w / 2 - 2;
    inner += `<i class="dt" style="width:${d}px;height:${d}px;left:${c - d / 2}px;top:${d > 9 ? 6 : 8}px"></i>`;
  }
  for (const n of notch) inner += `<i class="nt" style="left:${n - x1 - 9}px;top:0"></i><i class="nt lo" style="left:${n - x1 - 9}px;bottom:0"></i>`;
  if (label) inner += `<div class="tx position-relative" style="z-index:2"><span class="fit" ${o.w ? `data-w="${o.w}"` : ''}>${label}</span></div>`;
  if (o.r) inner += `<i class="rn" style="left:${o.r - x1 - 11}px"></i>`;
  a += `<div class="rg ${kind} ${w < 30 || o.s ? 'slim' : ''}" style="left:${x1 - O}px;width:${w}px;top:${top}px">${inner}</div>`;
}
a += `<div class="phead" style="left:${2294.5 - O}px"></div>`;
document.getElementById('arr').innerHTML = a;

// pan knobs
document.querySelectorAll('.knobrow').forEach(k => {
  k.innerHTML = `<svg width="135" height="102" viewBox="-67 -53 135 102"><path d="M-18 26A32 32 0 1 1 18 26" fill="none" stroke="#3a3a3a" stroke-width="8"/><circle r="28" fill="#868686"/><path d="M-19-20A28 28 0 0 1 19-20" fill="none" stroke="#aaa" stroke-width="1.500"/><path d="M0-36V-28" stroke="#35c052" stroke-width="1.500"/><path d="M0-24V-18" stroke="#000" stroke-width="3"/></svg>`;
});
// level scale and fader, origin at y 998
const lab = [[0,1007],[3,1025],[6,1043],[9,1061],[12,1079],[15,1097],[18,1115],[21,1133],[24,1151],[30,1175],[35,1195],[40,1215],[45,1235],[50,1255],[60,1275]];
const maj = [1009,1043,1076.5,1111,1147,1169,1197,1219,1243,1255,1277];
const min = [1019,1031,1055,1065,1088.6,1101,1123,1135,1151,1157,1163,1175,1181,1187,1193,1203,1209,1215,1225,1229,1235,1239,1249,1261,1267];
document.querySelectorAll('.fader').forEach(f => {
  const cy = +f.dataset.cap, Y = 998;
  let s = `<rect x="90" y="4" width="24" height="278" rx="4" fill="#3a3a3a"/><rect x="31" y="8" width="4" height="274" rx="2" fill="#3a3a3a"/>`;
  lab.forEach(([t, y], i) => {
    s += `<text x="81" y="${y - Y + 5}" text-anchor="end" font-size="13.500" fill="#c4c4c4">${t}</text><path d="M84 ${y - Y}H90" stroke="#999" stroke-width="2"/>`;
    if (i < lab.length - 1) { const nx = lab[i + 1][1], n = nx > 1151 ? 6 : 3; for (let k = 1; k < n; k++) s += `<path d="M88 ${y - Y + (nx - y) * k / n}H90" stroke="#999" stroke-width="1.500"/>`; }
  });
  maj.forEach(y => s += `<path d="M7 ${y - Y}H29" stroke="${y === 1076.5 ? '#fff' : '#a0a0a0'}" stroke-width="2"/>`);
  min.forEach(y => s += `<path d="M21 ${y - Y}H29" stroke="#8c8c8c" stroke-width="2"/>`);
  s += `<rect x="18" y="${cy + 4}" width="34" height="70" rx="2" fill="#000" opacity=".35"/><rect x="16" y="${cy}" width="34" height="70" rx="2" fill="url(#cap)" stroke="#3a3a3a"/>`;
  for (let k = 0; k < 4; k++) s += `<path d="M16 ${cy + 15 + k * 5}H50M16 ${cy + 40 + k * 5}H50" stroke="#6d7171" stroke-width="1" opacity=".6"/>`;
  s += `<path d="M16 ${cy + 35}H50" stroke="#333" stroke-width="2"/>`;
  f.innerHTML = `<svg width="135" height="326" viewBox="0 -34 135 326">${s}</svg>`;
});
// set each label to its measured width through tracking
document.querySelectorAll('.fit[data-w]').forEach(e => {
  const n = e.textContent.length, d = (e.dataset.w - e.offsetWidth) / n;
  e.style.letterSpacing = d.toFixed(3) + 'px';
});
</script>
</body>
</html>
